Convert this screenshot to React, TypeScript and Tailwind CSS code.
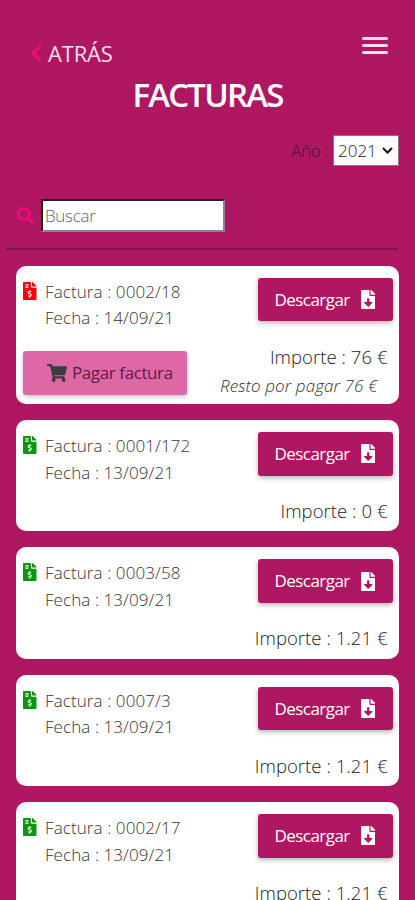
import {
  FaChevronLeft,
  FaFileDownload,
  FaFileInvoiceDollar,
  FaSearch,
  FaShoppingCart,
} from "react-icons/fa";

type Invoice = {
  number: string;
  date: string;
  amount: string;
  pending?: string;
};

const invoices: Invoice[] = [
  { number: "0002/18", date: "14/09/21", amount: "76 €", pending: "76 €" },
  { number: "0001/172", date: "13/09/21", amount: "0 €" },
  { number: "0003/58", date: "13/09/21", amount: "1.21 €" },
  { number: "0007/3", date: "13/09/21", amount: "1.21 €" },
  { number: "0002/17", date: "13/09/21", amount: "1.21 €" },
];

const InvoiceCard = (props: Invoice) => {
  return (
    <div
      className={
        props.pending
          ? "flex h-[138.5px] shrink-0 justify-between rounded-[10px] bg-white pt-3 pr-[6.5px] pl-[7px]"
          : "flex h-[111.4px] shrink-0 justify-between rounded-[10px] bg-white pt-3 pr-[6.5px] pl-[7px]"
      }
    >
      <div className="flex flex-col">
        <div className="flex">
          <FaFileInvoiceDollar
            className={
              props.pending
                ? "mt-[4px] h-[18px] w-[13.5px] text-[#fb0007]"
                : "mt-[4px] h-[18px] w-[13.5px] text-[#0a970d]"
            }
          />
          <div className="mt-[1px] ml-[8.5px] text-[17px] leading-[26.6px] font-light whitespace-nowrap text-[#333]">
            <div className="tracking-[0.1px]">Factura : {props.number}</div>
            <div className="tracking-[0.08px]">Fecha : {props.date}</div>
          </div>
        </div>
        {props.pending && (
          <button className="mt-[19px] flex h-[44px] w-[163.5px] items-center rounded-[3px] bg-[#de68a6] pl-[24px] text-[17px] tracking-[-0.4px] whitespace-nowrap text-[#611c48] shadow-[0_2px_5px_rgba(0,0,0,0.22)]">
            <FaShoppingCart className="mr-[5px] h-[18px] w-[20px] text-[#3c3a3d]" />
            Pagar factura
          </button>
        )}
      </div>
      <div className="flex flex-col items-end">
        <button className="flex h-[43.5px] w-[134.5px] items-center justify-between rounded-[3px] bg-[#b01762] pr-[17.5px] pl-[16.5px] text-[17px] font-medium tracking-[-0.55px] text-white shadow-[0_2px_5px_rgba(0,0,0,0.3)]">
          Descargar
          <FaFileDownload className="h-[19px] w-[14.5px]" />
        </button>
        <div className="mt-[21.5px] pr-[5px] text-[18.5px] leading-[28px] font-light tracking-[0.05px] whitespace-nowrap text-[#222]">
          Importe : {props.amount}
        </div>
        {props.pending && (
          <div className="pr-[15px] text-[17px] leading-[29px] font-light tracking-[0.1px] whitespace-nowrap text-[#333] italic">
            Resto por pagar {props.pending}
          </div>
        )}
      </div>
    </div>
  );
};

const App = () => {
  return (
    <div className="flex h-[900px] w-[415px] flex-col overflow-hidden bg-[#b01762] font-['Open_Sans',sans-serif]">
      <header className="flex h-[74px] shrink-0 items-start justify-between pr-[27px] pl-[30px]">
        <a className="mt-[37px] flex items-center gap-[5px] text-[22px] leading-[32px] tracking-[-0.2px] text-[#f7dfea]">
          <FaChevronLeft className="h-[20px] w-[13px] text-[#f10a78]" />
          ATRÁS
        </a>
        <div className="mt-[37px] flex w-[26px] flex-col gap-[4px]">
          <div className="h-[3px] rounded-full bg-[#f7dce9]" />
          <div className="h-[3px] rounded-full bg-[#f7dce9]" />
          <div className="h-[3px] rounded-full bg-[#f7dce9]" />
        </div>
      </header>
      <h1 className="h-[42px] shrink-0 text-center text-[33px] leading-[41px] font-semibold tracking-[-1.8px] text-white">
        FACTURAS
      </h1>
      <div className="mt-[19px] flex h-[31px] shrink-0 items-center justify-end pr-[16px] text-[17px] font-light">
        <span className="mr-[5px] tracking-[-0.4px] text-[#4d1238]">Año :</span>
        <div className="flex h-[31px] w-[66px] items-center justify-between border border-[#87758a] bg-white pr-[5px] pl-[4px] text-[17px] text-[#222]">
          2021
          <svg className="h-[7px] w-[11px]" viewBox="0 0 11 7" fill="none">
            <path d="M1 1l4.5 4.5L10 1" stroke="#111" strokeWidth="2" />
          </svg>
        </div>
      </div>
      <div className="mt-[33px] flex h-[33px] shrink-0 items-center pl-[17px]">
        <FaSearch className="mr-[7px] h-[17px] w-[17px] text-[#f10a78]" />
        <input
          className="h-[33px] w-[184px] border-2 border-t-[#222] border-r-[#888] border-b-[#888] border-l-[#222] bg-white px-[2px] text-[17px] font-light tracking-[-0.3px] placeholder:text-[#666]"
          placeholder="Buscar"
        />
      </div>
      <div className="mt-[16px] mr-[17px] ml-[6px] h-[1.5px] shrink-0 bg-[#76194e]" />
      <main className="mt-[16px] flex flex-col gap-4 px-4">
        {invoices.map((invoice) => (
          <InvoiceCard key={invoice.number} {...invoice} />
        ))}
      </main>
    </div>
  );
};

export default App;
